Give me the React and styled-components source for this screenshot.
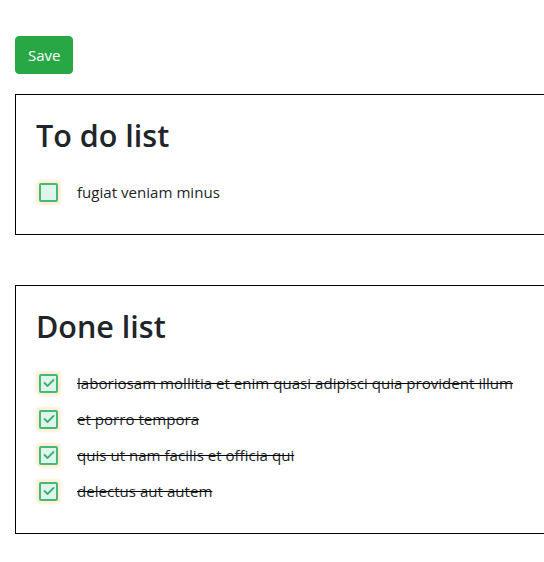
import React from "react";
import styled, { createGlobalStyle } from "styled-components";

const Global = createGlobalStyle`
  body {
    margin: 0;
    font-family: "Segoe UI", "Open Sans", "Noto Sans", sans-serif;
    color: #212529;
    background: #fff;
    overflow: hidden;
  }
`;

const Page = styled.div`
  padding: 36px 0 0 15px;
  width: 600px;
`;

const SaveButton = styled.button`
  display: block;
  font-family: inherit;
  font-size: 15px;
  line-height: 24px;
  padding: 6px 12px;
  color: #fff;
  background: #28a745;
  border: 1px solid #28a745;
  border-radius: 4px;
  cursor: pointer;
`;

const Card = styled.section`
  border: 1px solid #000;
  padding: 20px;
  margin-top: ${(p) => p.$top}px;
`;

const Title = styled.h2`
  margin: 0;
  font-size: 30.5px;
  font-weight: 600;
  line-height: 40px;
`;

const List = styled.ul`
  list-style: none;
  margin: 19px 0 4px;
  padding: 0;
`;

const Item = styled.li`
  display: flex;
  align-items: center;
  height: 36px;
  gap: 19px;
  font-size: 15.1px;
`;

const Box = styled.span`
  flex: none;
  margin-left: 3px;
  width: 15px;
  height: 15px;
  border: 2px solid #48b77a;
  border-radius: 2px;
  background: #def5ee;
  box-shadow: 0 0 2px 3px rgba(253, 226, 170, 0.5);
  display: flex;
  align-items: center;
  justify-content: center;
`;

const Label = styled.span`
  text-decoration: ${(p) => (p.$done ? "line-through" : "none")};
  text-decoration-color: #000;
  white-space: nowrap;
`;

const Check = () => (
  <svg width="12" height="10" viewBox="0 0 12 10">
    <path d="M1.5 5 L4.5 8 L10.5 2" fill="none" stroke="#3fae6f" strokeWidth="1.8" strokeLinecap="round" strokeLinejoin="round" />
  </svg>
);

const todo = ["fugiat veniam minus"];
const done = [
  "laboriosam mollitia et enim quasi adipisci quia provident illum",
  "et porro tempora",
  "quis ut nam facilis et officia qui",
  "delectus aut autem",
];

export default function App() {
  return (
    <Page>
      <Global />
      <SaveButton>Save</SaveButton>
      <Card $top={20}>
        <Title>To do list</Title>
        <List>
          {todo.map((t) => (
            <Item key={t}>
              <Box />
              <Label>{t}</Label>
            </Item>
          ))}
        </List>
      </Card>
      <Card $top={50}>
        <Title>Done list</Title>
        <List>
          {done.map((t) => (
            <Item key={t}>
              <Box>
                <Check />
              </Box>
              <Label $done>{t}</Label>
            </Item>
          ))}
        </List>
      </Card>
    </Page>
  );
}
